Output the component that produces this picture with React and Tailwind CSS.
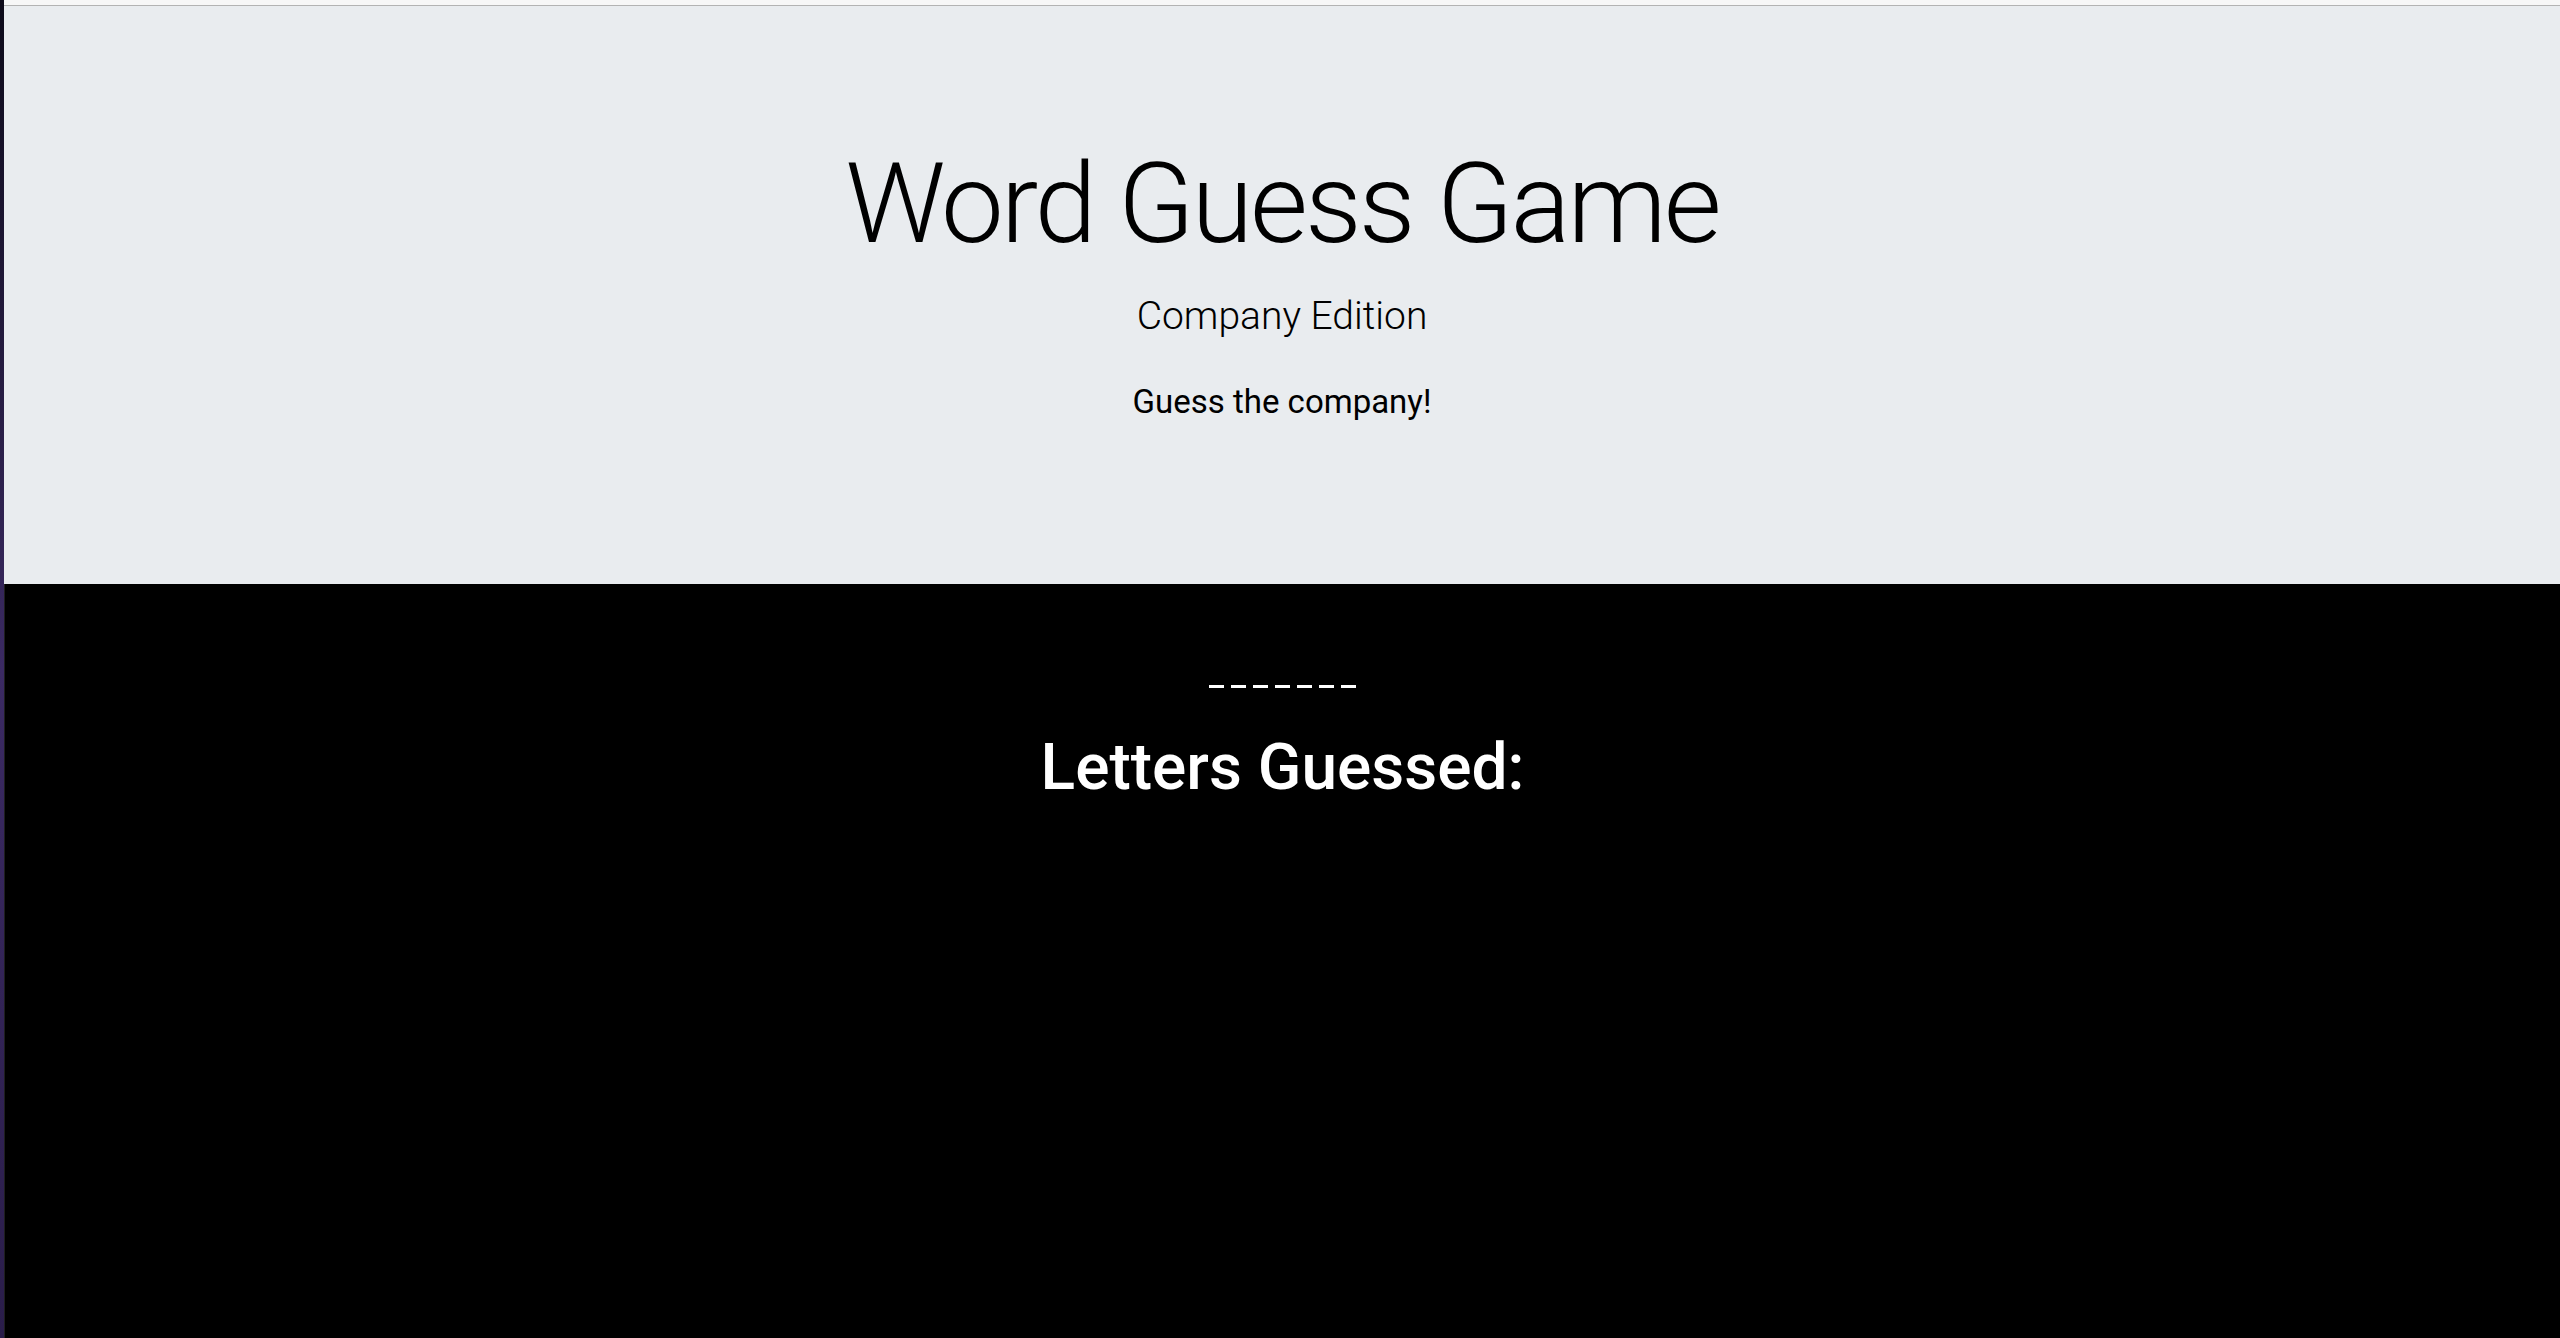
export default function App() {
  return (
    <div className="flex h-[1338px] w-full overflow-hidden" style={{ fontFamily: "Roboto, 'Noto Sans', sans-serif" }}>
      <div className="w-[4px] shrink-0 bg-gradient-to-b from-[#0d0b1a] via-[#3b2a63] to-[#2a1d4a]" />
      <div className="flex flex-1 flex-col">
        <div className="h-[6px] shrink-0 border-b border-[#b3b3b3] bg-[#f7f7f7]" />
        <div className="flex h-[578px] shrink-0 flex-col items-center bg-[#e9ecef] text-black">
          <h1 className="mt-[142px] text-[112px] font-light leading-none tracking-[-3px]">Word Guess Game</h1>
          <p className="mt-[37px] text-[39px] font-light leading-none">Company Edition</p>
          <p className="mt-[49px] text-[33px] font-normal leading-none">Guess the company!</p>
        </div>
        <div className="flex flex-1 flex-col items-center border-l border-[#1f1f1f] bg-black text-white">
          <div className="mt-[101px] flex gap-[7px]" aria-label="_ _ _ _ _ _ _">
            <span className="h-[3px] w-[15px] bg-white" />
            <span className="h-[3px] w-[15px] bg-white" />
            <span className="h-[3px] w-[15px] bg-white" />
            <span className="h-[3px] w-[15px] bg-white" />
            <span className="h-[3px] w-[15px] bg-white" />
            <span className="h-[3px] w-[15px] bg-white" />
            <span className="h-[3px] w-[15px] bg-white" />
          </div>
          <h2 className="mt-[48px] text-[64px] font-medium leading-none">Letters Guessed:</h2>
        </div>
      </div>
    </div>
  );
}
